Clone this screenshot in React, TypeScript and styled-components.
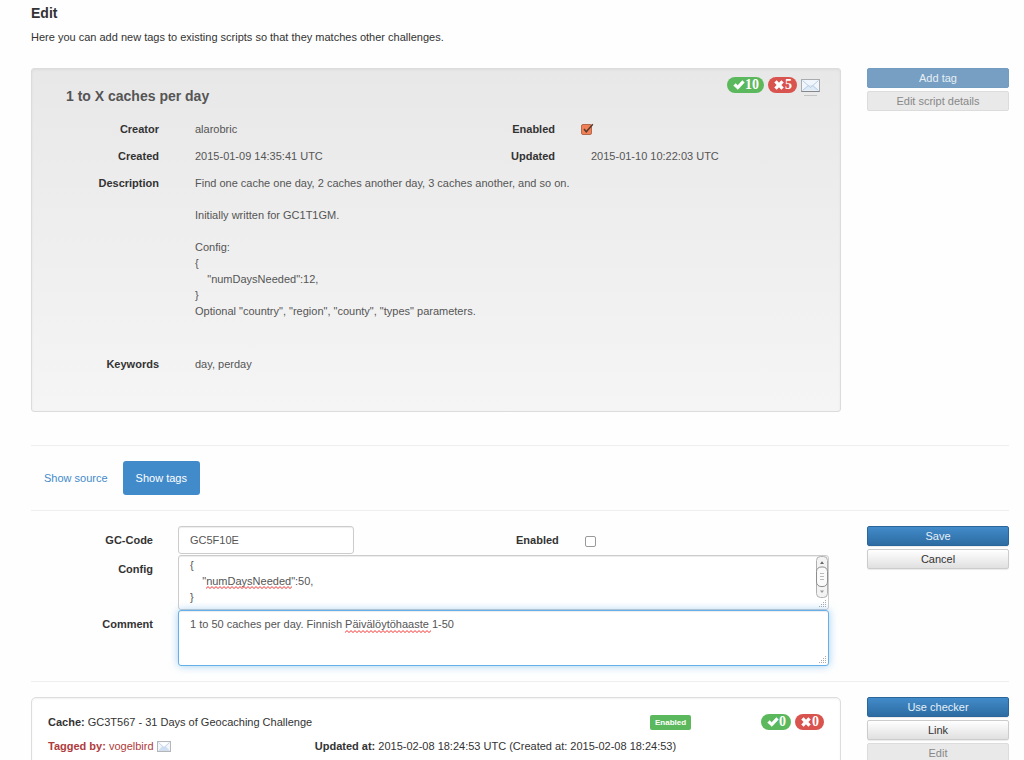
import React from "react";
import styled, { createGlobalStyle, css } from "styled-components";

const GlobalStyle = createGlobalStyle`
  *, *::before, *::after { box-sizing: border-box; }
  html { scrollbar-width: none; }
  body {
    margin: 0;
    background: #fefefe;
    color: #333;
    font: 11px/16px "Liberation Sans", Arial, sans-serif;
  }
  input, textarea, button { font: inherit; color: inherit; margin: 0; }
`;

const Page = styled.main`
  padding: 4px 15px 0 31px;
`;

const Heading = styled.h1`
  margin: 0;
  font-size: 14px;
  line-height: 18px;
`;

const Intro = styled.p`
  margin: 7px 0 23px;
`;

const Split = styled.section`
  display: grid;
  grid-template-columns: minmax(0, 1fr) 142px;
  column-gap: 26px;
  align-items: start;
`;

const Rule = styled.hr<{ $top?: number }>`
  border: 0;
  border-top: 1px solid #eee;
  margin: ${(p) => p.$top ?? 15}px 0 15px;
`;

const Actions = styled.div`
  display: flex;
  flex-direction: column;
  gap: 3px;
`;

const Button = styled.button<{ $primary?: boolean }>`
  height: 20px;
  padding: 0;
  border: 1px solid #ccc;
  border-radius: 2px;
  line-height: 16px;
  color: #333;
  background: linear-gradient(#fff, #e0e0e0);
  box-shadow: 0 1px 1px rgba(0, 0, 0, 0.08);
  ${(p) =>
    p.$primary &&
    css`
      color: #e6f0f8;
      border-color: #2b669a;
      background: linear-gradient(#428bca, #2d6ca2);
    `}
  &:disabled {
    box-shadow: none;
    color: #888;
    border-color: #dcdcdc;
    background: #e9e9e9;
    ${(p) =>
      p.$primary &&
      css`
        color: #e6eef5;
        border-color: #729cc0;
        background: #769fc3;
      `}
  }
`;

const ScriptCard = styled.article`
  min-height: 344px;
  padding-bottom: 38px;
  border: 1px solid #dcdcdc;
  border-radius: 3px;
  background: linear-gradient(#e8e8e8, #f5f5f5);
  box-shadow: inset 0 1px 3px rgba(0, 0, 0, 0.05);
  color: #555;
`;

const CardHead = styled.header`
  display: flex;
  justify-content: space-between;
  align-items: flex-start;
  padding: 8px 20px 0 34px;
`;

const CardTitle = styled.h2`
  margin: 9px 0 0;
  font-size: 14px;
  line-height: 20px;
`;

const Badges = styled.div`
  display: flex;
  gap: 4px;
`;

const Pill = styled.span<{ $bad?: boolean }>`
  display: inline-flex;
  align-items: center;
  height: 16px;
  padding: 0 5px 0 6px;
  border-radius: 8px;
  color: #fff;
  background: ${(p) => (p.$bad ? "#d9534f" : "#5cb85c")};
  font: bold 14px/16px "Liberation Serif", "Times New Roman", serif;
`;

const Details = styled.dl`
  display: grid;
  grid-template-columns: 127px minmax(0, 1fr) 75px minmax(0, 1fr);
  column-gap: 36px;
  row-gap: 11px;
  margin: 15px 0 0;
`;

const Term = styled.dt`
  text-align: right;
  font-weight: bold;
  color: #333;
`;

const Value = styled.dd<{ $wide?: boolean }>`
  margin: 0;
  white-space: pre-line;
  ${(p) =>
    p.$wide &&
    css`
      grid-column: 2 / -1;
      white-space: pre-wrap;
    `}
`;

const Description = styled(Value)`
  min-height: 170px;
`;

const TickHolder = styled.span`
  display: flex;
  position: relative;
  margin: 3px 0 0 -10px;
  svg {
    position: absolute;
    left: 0;
    top: -1px;
    pointer-events: none;
  }
`;

const Check = styled.input<{ $orange?: boolean }>`
  appearance: none;
  width: 11px;
  height: 11px;
  border: 1px solid ${(p) => (p.$orange ? "#b5694c" : "#999")};
  border-radius: 2px;
  background: ${(p) => (p.$orange ? "#f08055" : "#fff")};
`;

const Nav = styled.nav`
  display: flex;
  gap: 2px;
`;

const NavLink = styled.a<{ $active?: boolean }>`
  padding: 9px 13px;
  border-radius: 3px;
  text-decoration: none;
  color: ${(p) => (p.$active ? "#fff" : "#428bca")};
  background: ${(p) => (p.$active ? "#428bca" : "transparent")};
`;

const Form = styled.div`
  display: grid;
  grid-template-columns: 122px minmax(0, 1fr);
  column-gap: 25px;
  padding-right: 12px;
`;

const Label = styled.label`
  padding-top: 6px;
  text-align: right;
  font-weight: bold;
`;

const CodeRow = styled.div`
  display: grid;
  grid-template-columns: 54fr 63fr 83fr;
  padding-bottom: 1px;
`;

const fieldLook = css`
  display: block;
  width: 100%;
  padding: 5px 11px;
  border: 1px solid #ccc;
  border-radius: 3px;
  background: #fff;
  color: #555;
  box-shadow: inset 0 1px 1px rgba(0, 0, 0, 0.075);
  outline: 0;
`;

const TextBox = styled.input`
  ${fieldLook}
  height: 28px;
`;

const EnabledCheck = styled(Check)`
  margin: 10px 0 0 26px;
`;

const AreaHolder = styled.div`
  position: relative;
`;

const Area = styled.textarea<{ $active?: boolean }>`
  ${fieldLook}
  height: ${(p) => (p.$active ? 56 : 55)}px;
  resize: none;
  overflow: hidden;
  ${(p) =>
    p.$active
      ? css`
          border-color: #66afe9;
          box-shadow: inset 0 1px 1px rgba(0, 0, 0, 0.075),
            0 0 8px rgba(102, 175, 233, 0.6);
        `
      : css`
          padding-top: 1px;
        `}
`;

const Squiggle = styled.svg<{ $x: number; $y: number }>`
  position: absolute;
  left: ${(p) => p.$x}px;
  top: ${(p) => p.$y}px;
  pointer-events: none;
`;

const GripSvg = styled.svg`
  position: absolute;
  right: 2px;
  bottom: 2px;
  pointer-events: none;
`;

const ScrollSvg = styled.svg`
  position: absolute;
  right: 1px;
  top: 1px;
`;

const TagCard = styled.article`
  display: flex;
  flex-direction: column;
  gap: 8px;
  padding: 16px;
  border: 1px solid #ddd;
  border-radius: 5px;
  background: #fff;
  box-shadow: inset 0 1px 2px rgba(0, 0, 0, 0.06);
`;

const TagTop = styled.div`
  display: grid;
  grid-template-columns: minmax(0, 1fr) 111px auto;
  align-items: center;
`;

const TagBottom = styled.div`
  display: grid;
  grid-template-columns: 11fr 21fr;
`;

const State = styled.span`
  justify-self: start;
  padding: 0 5px;
  border-radius: 2px;
  color: #fff;
  background: #5cb85c;
  font: bold 8px/15px "Liberation Sans", Arial, sans-serif;
`;

const Tagger = styled.span`
  display: flex;
  align-items: center;
  gap: 3px;
  color: #b03a3c;
`;

const OkIcon = () => (
  <svg width="12" height="10" viewBox="0 0 12 10" aria-hidden="true">
    <path d="M0.6 5.6 2.8 3.6 4.7 5.5 9.3 0.6 11.4 2.5 4.9 9.4Z" fill="#fff" stroke="#fff" strokeWidth=".5" strokeLinejoin="round" />
  </svg>
);

const RemoveIcon = () => (
  <svg width="11" height="10" viewBox="0 0 11 10" aria-hidden="true">
    <path d="M2.6.6 5 2.9 7.4.6 9.4 2.6 7.1 5 9.4 7.4 7.4 9.4 5 7.1 2.6 9.4.6 7.4 2.9 5 .6 2.6Z" fill="#fff" stroke="#fff" strokeWidth=".6" strokeLinejoin="round" />
  </svg>
);

const Envelope = () => (
  <svg width="19" height="19" viewBox="0 0 19 19" aria-label="Send message" role="img">
    <rect x=".5" y="2.5" width="18" height="12" fill="#f1f6fc" stroke="#a9abae" />
    <path d="M.5 14.5h18" stroke="#85878a" />
    <path d="M1.5 13.5 7.5 8h4l6 5.5z" fill="#dfeaf7" />
    <path d="M1.5 3.5 9.5 10.5 17.5 3.5M1.5 13.5 7.3 8.6M17.5 13.5 11.7 8.6" fill="none" stroke="#b7cce4" />
    <path d="M3 18.5h13" stroke="#c3c3c3" />
  </svg>
);

const SmallEnvelope = () => (
  <svg width="14" height="11" viewBox="0 0 14 11" aria-label="Send message" role="img">
    <rect x=".5" y=".5" width="13" height="10" fill="#f3f7fc" stroke="#b4b6b8" />
    <path d="M1 10 5 5.5h4L13 10z" fill="#cfdff1" />
    <path d="M1.5 1.5 7 6.5 12.5 1.5" fill="#fff" stroke="#bfd2e8" />
  </svg>
);

const Tick = () => (
  <svg width="13" height="12" viewBox="0 0 13 12" aria-hidden="true">
    <path d="M3 6 5.3 8.8 11.8 1.2" fill="none" stroke="#5b3a2c" strokeWidth="1.5" />
  </svg>
);

const Wave = ({ x, y, width }: { x: number; y: number; width: number }) => {
  let d = "M0 2.5";
  for (let i = 2; i <= width; i += 2) d += `L${i} ${i % 4 ? 0.6 : 2.5}`;
  return (
    <Squiggle $x={x} $y={y} width={width} height="3" aria-hidden="true">
      <path d={d} fill="none" stroke="#f23a3a" />
    </Squiggle>
  );
};

const Grip = () => (
  <GripSvg width="8" height="8" viewBox="0 0 8 8" aria-hidden="true">
    <path d="M6 0h1v1H6zM4 2h1v1H4zM6 2h1v1H6zM2 4h1v1H2zM4 4h1v1H4zM6 4h1v1H6zM0 6h1v1H0zM2 6h1v1H2zM4 6h1v1H4zM6 6h1v1H6z" fill="#aaa" />
  </GripSvg>
);

const ScrollBar = () => (
  <ScrollSvg width="12" height="42" viewBox="0 0 12 42" aria-hidden="true">
    <rect x=".5" y=".5" width="11" height="41" rx="4" fill="#f3f3f3" stroke="#b0b0b0" />
    <rect x=".5" y="11" width="11" height="19.5" rx="4.5" fill="#fafafa" stroke="#8e8e8e" />
    <path d="M4 8 6 5.2 8 8z" fill="#666" />
    <path d="M4 34.5 6 37 8 34.5z" fill="#999" />
    <path d="M4 17.5h4M4 20.5h4M4 23.5h4" stroke="#bbb" />
  </ScrollSvg>
);

const Votes = ({ ok, bad }: { ok: number; bad: number }) => (
  <>
    <Pill><OkIcon />{ok}</Pill>
    <Pill $bad><RemoveIcon />{bad}</Pill>
  </>
);

const descriptionText = `Find one cache one day, 2 caches another day, 3 caches another, and so on.

Initially written for GC1T1GM.

Config:
{
    "numDaysNeeded":12,
}
Optional "country", "region", "county", "types" parameters.`;

export default function App() {
  return (
    <>
      <GlobalStyle />
      <Page>
        <Heading>Edit</Heading>
        <Intro>Here you can add new tags to existing scripts so that they matches other challenges.</Intro>

        <Split>
          <ScriptCard>
            <CardHead>
              <CardTitle>1 to X caches per day</CardTitle>
              <Badges>
                <Votes ok={10} bad={5} />
                <Envelope />
              </Badges>
            </CardHead>
            <Details>
              <Term>Creator</Term>
              <Value>alarobric</Value>
              <Term><label htmlFor="script-enabled">Enabled</label></Term>
              <Value>
                <TickHolder>
                  <Check id="script-enabled" type="checkbox" $orange defaultChecked />
                  <Tick />
                </TickHolder>
              </Value>
              <Term>Created</Term>
              <Value>2015-01-09 14:35:41 UTC</Value>
              <Term>Updated</Term>
              <Value>2015-01-10 10:22:03 UTC</Value>
              <Term>Description</Term>
              <Description $wide>{descriptionText}</Description>
              <Term>Keywords</Term>
              <Value $wide>day, perday</Value>
            </Details>
          </ScriptCard>
          <Actions>
            <Button $primary disabled>Add tag</Button>
            <Button disabled>Edit script details</Button>
          </Actions>
        </Split>

        <Rule $top={33} />
        <Nav>
          <NavLink href="#source">Show source</NavLink>
          <NavLink href="#tags" $active>Show tags</NavLink>
        </Nav>
        <Rule />

        <Split>
          <Form>
            <Label htmlFor="gc-code">GC-Code</Label>
            <CodeRow>
              <TextBox id="gc-code" defaultValue="GC5F10E" />
              <Label htmlFor="tag-enabled">Enabled</Label>
              <EnabledCheck id="tag-enabled" type="checkbox" />
            </CodeRow>
            <Label htmlFor="config">Config</Label>
            <AreaHolder>
              <Area id="config" spellCheck={false} defaultValue={'{\n    "numDaysNeeded":50,\n}'} />
              <Wave x={28} y={31} width={86} />
              <ScrollBar />
              <Grip />
            </AreaHolder>
            <Label htmlFor="comment">Comment</Label>
            <AreaHolder>
              <Area id="comment" $active spellCheck={false} defaultValue="1 to 50 caches per day. Finnish Päivälöytöhaaste 1-50" />
              <Wave x={167} y={20} width={86} />
              <Grip />
            </AreaHolder>
          </Form>
          <Actions>
            <Button $primary>Save</Button>
            <Button>Cancel</Button>
          </Actions>
        </Split>
        <Rule />

        <Split>
          <TagCard>
            <TagTop>
              <span><b>Cache:</b> GC3T567 - 31 Days of Geocaching Challenge</span>
              <State>Enabled</State>
              <Badges><Votes ok={0} bad={0} /></Badges>
            </TagTop>
            <TagBottom>
              <Tagger><span><b>Tagged by:</b> vogelbird</span><SmallEnvelope /></Tagger>
              <span><b>Updated at:</b> 2015-02-08 18:24:53 UTC (Created at: 2015-02-08 18:24:53)</span>
            </TagBottom>
          </TagCard>
          <Actions>
            <Button $primary>Use checker</Button>
            <Button>Link</Button>
            <Button disabled>Edit</Button>
          </Actions>
        </Split>
      </Page>
    </>
  );
}
